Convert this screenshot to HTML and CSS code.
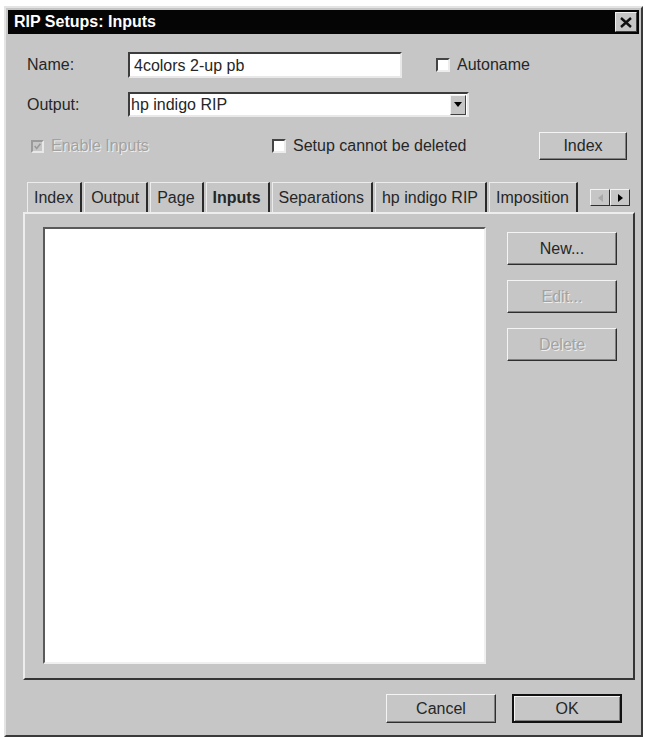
FILE: index.html
```html
<!DOCTYPE html>
<html>
<head>
<meta charset="utf-8">
<link rel="stylesheet" href="styles.css">
</head>
<body>
<div class="window">
  <div class="titlebar">
    <span class="title">RIP Setups: Inputs</span>
    <span class="close"><svg width="12" height="11" viewBox="0 0 12 11"><path d="M1 1L11 10M11 1L1 10" stroke="#111" stroke-width="2.4"/></svg></span>
  </div>

  <div class="row row-name">
    <span class="label">Name:</span>
    <div class="textbox">4colors 2-up pb</div>
    <span class="check"></span>
    <span class="check-label">Autoname</span>
  </div>

  <div class="row row-output">
    <span class="label">Output:</span>
    <div class="select">
      <span class="select-text">hp indigo RIP</span>
      <span class="drop"><svg width="8" height="5" viewBox="0 0 8 5"><path d="M0 0H8L4 5Z" fill="#000"/></svg></span>
    </div>
  </div>

  <div class="row row-opts">
    <div class="opt opt-enable">
      <span class="check check-disabled"><svg width="11" height="11" viewBox="0 0 11 11"><path d="M2 5L4.5 8L9 2" stroke="#9a9a9a" stroke-width="2" fill="none"/></svg></span>
      <span class="check-label disabled">Enable Inputs</span>
    </div>
    <div class="opt opt-setup">
      <span class="check"></span>
      <span class="check-label">Setup cannot be deleted</span>
    </div>
    <button class="btn btn-index">Index</button>
  </div>

  <div class="tabs-wrap">
    <div class="tabstrip">
      <span class="tab">Index</span>
      <span class="tab">Output</span>
      <span class="tab">Page</span>
      <span class="tab tab-active">Inputs</span>
      <span class="tab">Separations</span>
      <span class="tab">hp indigo RIP</span>
      <span class="tab">Imposition</span>
      <div class="scroller">
        <span class="sbtn"><svg width="5" height="8" viewBox="0 0 5 8"><path d="M5 0V8L0 4Z" fill="#a8a8a8"/></svg></span>
        <span class="sbtn"><svg width="5" height="8" viewBox="0 0 5 8"><path d="M0 0V8L5 4Z" fill="#000"/></svg></span>
      </div>
    </div>
    <div class="panel">
      <div class="listbox"></div>
      <div class="side">
        <button class="btn btn-side">New...</button>
        <button class="btn btn-side btn-disabled">Edit...</button>
        <button class="btn btn-side btn-disabled">Delete</button>
      </div>
    </div>
  </div>

  <div class="footer">
    <button class="btn btn-foot">Cancel</button>
    <button class="btn btn-foot btn-default">OK</button>
  </div>
</div>
</body>
</html>
```

FILE: styles.css
```css
html, body {
  margin: 0;
  padding: 0;
  background: #ffffff;
}

body {
  font-family: "Liberation Sans", Arial, sans-serif;
  font-size: 16px;
  color: #262626;
}

.window {
  box-sizing: border-box;
  width: 639px;
  height: 731px;
  margin: 6px 0 0 4px;
  background: #c6c6c6;
  border: 2px solid;
  border-color: #e4e4e4 #3a3a3a #3a3a3a #e4e4e4;
  padding: 2px;
  display: flex;
  flex-direction: column;
}

.titlebar {
  height: 24px;
  background: #050505;
  display: flex;
  align-items: center;
  justify-content: space-between;
  padding: 0 2px 0 6px;
  flex: 0 0 auto;
}

.title {
  color: #ffffff;
  font-weight: bold;
  font-size: 16px;
}

.close {
  width: 22px;
  height: 20px;
  box-sizing: border-box;
  background: #c6c6c6;
  border: 1px solid;
  border-color: #f0f0f0 #404040 #404040 #f0f0f0;
  display: flex;
  align-items: center;
  justify-content: center;
}

.row {
  display: flex;
  align-items: center;
  padding-left: 19px;
  flex: 0 0 auto;
}

.label {
  width: 101px;
  flex: 0 0 auto;
}

.row-name {
  margin-top: 18px;
  height: 26px;
}

.textbox {
  box-sizing: border-box;
  width: 274px;
  height: 26px;
  background: #ffffff;
  border: 2px solid;
  border-color: #3c3c3c #e8e8e8 #e8e8e8 #3c3c3c;
  padding: 2px 4px 0;
  line-height: 20px;
}

.check {
  box-sizing: border-box;
  width: 14px;
  height: 14px;
  background: #ffffff;
  border: 2px solid;
  border-color: #444 #ececec #ececec #444;
  display: inline-flex;
  align-items: center;
  justify-content: center;
  flex: 0 0 auto;
}

.row-name .check {
  margin-left: 34px;
}

.check-label {
  margin-left: 7px;
}

.row-output {
  margin-top: 14px;
  height: 25px;
}

.select {
  box-sizing: border-box;
  width: 341px;
  height: 25px;
  background: #ffffff;
  border: 2px solid;
  border-color: #3c3c3c #e8e8e8 #e8e8e8 #3c3c3c;
  display: flex;
  align-items: center;
  justify-content: space-between;
}

.select-text {
  padding-left: 1px;
}

.drop {
  box-sizing: border-box;
  width: 16px;
  height: 20px;
  margin-right: 1px;
  background: #c6c6c6;
  border: 1px solid;
  border-color: #f2f2f2 #404040 #404040 #f2f2f2;
  display: flex;
  align-items: center;
  justify-content: center;
}

.row-opts {
  margin-top: 15px;
  height: 28px;
  padding-right: 12px;
}

.opt {
  display: flex;
  align-items: center;
}

.opt-enable {
  width: 245px;
  padding-left: 4px;
  box-sizing: border-box;
}

.check-disabled {
  background: #c6c6c6;
  border-color: #9a9a9a #e8e8e8 #e8e8e8 #9a9a9a;
  width: 13px;
  height: 13px;
}

.disabled {
  color: #a2a2a2;
  text-shadow: 1px 1px 0 #efefef;
}

.btn {
  font-family: "Liberation Sans", Arial, sans-serif;
  font-size: 16px;
  color: #262626;
  background: #c6c6c6;
  box-sizing: border-box;
  border: 1px solid;
  border-color: #f4f4f4 #2e2e2e #2e2e2e #f4f4f4;
  box-shadow: inset -1px -1px 0 #808080;
  padding: 0;
  margin: 0;
}

.btn.btn-disabled {
  color: #a2a2a2;
  text-shadow: 1px 1px 0 #efefef;
}

.btn-index {
  margin-left: auto;
  width: 88px;
  height: 28px;
}

.tabs-wrap {
  margin: 22px 4px 0 15px;
  display: flex;
  flex-direction: column;
  flex: 0 0 auto;
}

.tabstrip {
  height: 30px;
  display: flex;
  align-items: stretch;
  padding-left: 4px;
}

.tab {
  display: flex;
  align-items: center;
  padding: 1px 7px 0 6px;
  margin-right: 2px;
  border-top: 1px solid #ececec;
  border-left: 1px solid #ececec;
  border-right: 2px solid #2a2a2a;
}

.tab-active {
  font-weight: bold;
}

.scroller {
  margin-left: auto;
  margin-right: 5px;
  margin-top: 7px;
  display: flex;
  height: 17px;
}

.sbtn {
  box-sizing: border-box;
  width: 20px;
  height: 17px;
  border: 1px solid;
  border-color: #f2f2f2 #2e2e2e #2e2e2e #f2f2f2;
  display: flex;
  align-items: center;
  justify-content: center;
}

.panel {
  box-sizing: border-box;
  width: 612px;
  height: 468px;
  border: 2px solid;
  border-color: #ededed #353535 #353535 #ededed;
  display: flex;
  padding: 13px 0 0 18px;
}

.listbox {
  box-sizing: border-box;
  width: 443px;
  height: 437px;
  background: #ffffff;
  border: 2px solid;
  border-color: #5a5a5a #f0f0f0 #f0f0f0 #5a5a5a;
}

.side {
  margin-left: 21px;
  padding-top: 5px;
  display: flex;
  flex-direction: column;
  gap: 15px;
}

.btn-side {
  width: 110px;
  height: 33px;
}

.footer {
  margin-top: 14px;
  display: flex;
  justify-content: flex-end;
  gap: 16px;
  padding-right: 17px;
}

.btn-foot {
  width: 110px;
  height: 29px;
}

.btn-default {
  border: 2px solid #111;
  box-shadow: inset 1px 1px 0 #f4f4f4, inset -1px -1px 0 #808080;
}
```
